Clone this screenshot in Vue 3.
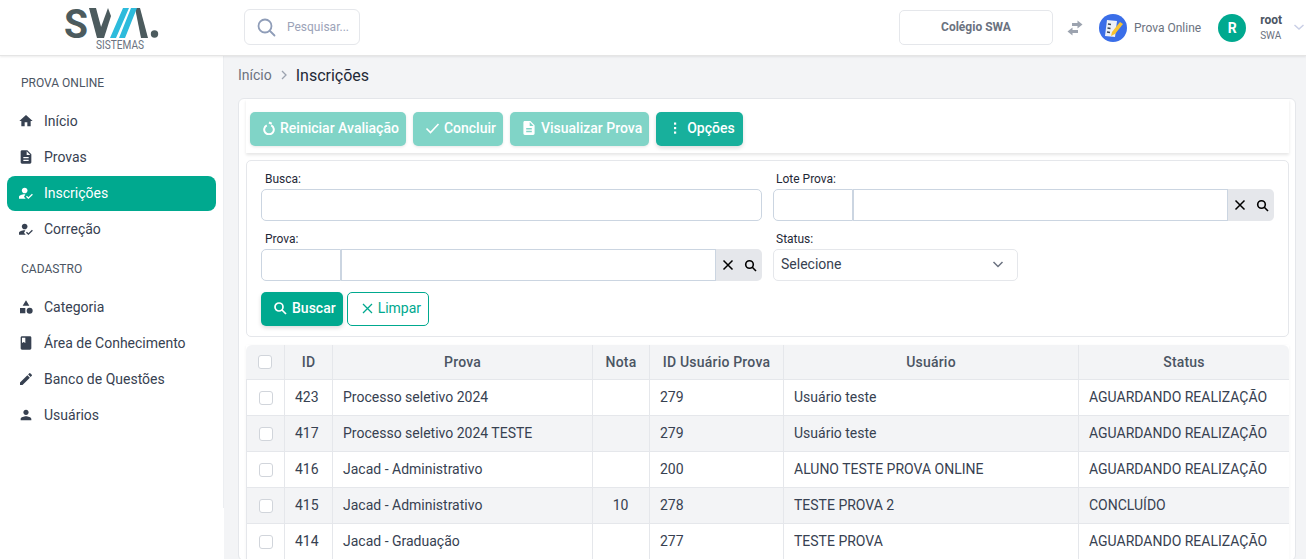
<script setup>
const menuA = [
  { label: 'Início', icon: 'home' },
  { label: 'Provas', icon: 'file' },
  { label: 'Inscrições', icon: 'usercheck', active: true },
  { label: 'Correção', icon: 'usercheck' }
]
const menuB = [
  { label: 'Categoria', icon: 'shapes' },
  { label: 'Área de Conhecimento', icon: 'book' },
  { label: 'Banco de Questões', icon: 'pencil' },
  { label: 'Usuários', icon: 'user' }
]
const rows = [
  { id: 423, prova: 'Processo seletivo 2024', nota: '', uid: 279, user: 'Usuário teste', status: 'AGUARDANDO REALIZAÇÃO' },
  { id: 417, prova: 'Processo seletivo 2024 TESTE', nota: '', uid: 279, user: 'Usuário teste', status: 'AGUARDANDO REALIZAÇÃO' },
  { id: 416, prova: 'Jacad - Administrativo', nota: '', uid: 200, user: 'ALUNO TESTE PROVA ONLINE', status: 'AGUARDANDO REALIZAÇÃO' },
  { id: 415, prova: 'Jacad - Administrativo', nota: '10', uid: 278, user: 'TESTE PROVA 2', status: 'CONCLUÍDO' },
  { id: 414, prova: 'Jacad - Graduação', nota: '', uid: 277, user: 'TESTE PROVA', status: 'AGUARDANDO REALIZAÇÃO' }
]
const icons = {
  home: 'M10 20v-6h4v6h5v-8h3L12 3 2 12h3v8z',
  file: 'M14 2H6c-1.1 0-2 .9-2 2v16c0 1.1.9 2 2 2h12c1.1 0 2-.9 2-2V8l-6-6zm2 16H8v-2h8v2zm0-4H8v-2h8v2zm-3-5V3.5L18.500 9H13z',
  usercheck: 'M10 12.500c2.400 0 4.300-1.900 4.300-4.300S12.400 4 10 4 5.700 5.800 5.700 8.200s1.900 4.300 4.300 4.300zm1 1.600C7 13.700 1.500 15.500 1.500 18v2.500h10L9 17.500l2-3.400zM15.600 21 12 17.500l1.400-1.400 2.200 2.100 5.300-5.100 1.400 1.400z',
  shapes: 'M12 2l5 8H7zM3 13.500h8v8H3zM17.500 13a4.500 4.500 0 1 1 0 9 4.500 4.500 0 0 1 0-9z',
  book: 'M18 2H6c-1.100 0-2 .9-2 2v16c0 1.100.9 2 2 2h12c1.100 0 2-.9 2-2V4c0-1.100-.9-2-2-2zM6 4h5v8l-2.500-1.500L6 12V4z',
  pencil: 'M3 17.250V21h3.750L17.810 9.940l-3.750-3.750L3 17.250zM20.710 7.040a1 1 0 0 0 0-1.410l-2.340-2.340a1 1 0 0 0-1.410 0l-1.830 1.830 3.750 3.750 1.830-1.830z',
  user: 'M12 12c2.210 0 4-1.790 4-4s-1.790-4-4-4-4 1.790-4 4 1.790 4 4 4zm0 2c-2.670 0-8 1.340-8 4v2h16v-2c0-2.660-5.330-4-8-4z'
}
</script>

<template>
  <div class="app">
    <header class="topbar">
      <div class="brand">
        <svg class="logo" width="96" height="52" viewBox="0 0 96 52" role="img" aria-label="SWA Sistemas">
          <text x="0" y="38" class="logo-s" textLength="24" lengthAdjust="spacingAndGlyphs">S</text>
          <path d="M25 8h7l8 30h-7z" fill="#4c5b5e" />
          <path d="M33 38h7l7-22-3-8z" fill="#4c5b5e" />
          <path d="M71 8h5l8 30h-7z" fill="#4c5b5e" />
          <path d="M46 38h6L65 8h-6zM55 38h6L73 8h-6z" fill="#2dbbdc" />
          <circle cx="90.500" cy="34" r="3.700" fill="#4c5b5e" />
          <text x="32" y="49" class="logo-sub" textLength="48" lengthAdjust="spacingAndGlyphs">SISTEMAS</text>
        </svg>
      </div>
      <div class="search">
        <svg width="20" height="20" viewBox="0 0 20 20" fill="none" stroke="#8f9db8" stroke-width="1.800">
          <circle cx="9" cy="9" r="6.500" /><path d="M14 14l4.500 4.500" stroke-linecap="round" />
        </svg>
        <span>Pesquisar...</span>
      </div>
      <div class="spacer"></div>
      <div class="school">Colégio SWA</div>
      <svg class="swap" width="18" height="18" viewBox="0 0 18 18" fill="#9ca3af">
        <path d="M11.500 1.500 16.500 5.500 11.500 9.500V7H6V4h5.500zM6.500 8.500V11H12v3H6.500v2.500L1.500 12.500z" />
      </svg>
      <div class="module">
        <svg width="28" height="28" viewBox="0 0 28 28">
          <circle cx="14" cy="14" r="14" fill="#3a6ee8" />
          <path d="M8 6l10 1-2 16-10-1z" fill="#edf1f7" />
          <path d="M9 10l3 .5M8.500 14l3 .5M8 18l3 .5" stroke="#3d4654" stroke-width="1.500" />
          <path d="M21 8l3 2-8 10-4 2 1-4z" fill="#f7c331" />
        </svg>
        <span>Prova Online</span>
      </div>
      <div class="avatar">R</div>
      <div class="who"><strong>root</strong><span>SWA</span></div>
      <svg class="caret" width="12" height="12" viewBox="0 0 12 12" fill="none" stroke="#c9cfe6" stroke-width="1.500"><path d="M1.500 4l4.500 4 4.500-4" /></svg>
    </header>

    <div class="body">
      <aside class="sidebar">
        <div class="section first">PROVA ONLINE</div>
        <a v-for="m in menuA" :key="m.label" class="item" :class="{ active: m.active }">
          <svg width="16" height="16" viewBox="0 0 24 24" fill="currentColor"><path :d="icons[m.icon]" /></svg>
          <span>{{ m.label }}</span>
        </a>
        <div class="section">CADASTRO</div>
        <a v-for="m in menuB" :key="m.label" class="item">
          <svg width="16" height="16" viewBox="0 0 24 24" fill="currentColor"><path :d="icons[m.icon]" /></svg>
          <span>{{ m.label }}</span>
        </a>
      </aside>

      <main class="main">
        <nav class="crumbs">
          <span class="c1">Início</span>
          <svg width="8" height="10" viewBox="0 0 8 10" fill="none" stroke="#9ca3af" stroke-width="1.300"><path d="M2 1l4 4-4 4" /></svg>
          <span class="c2">Inscrições</span>
        </nav>

        <section class="page">
          <div class="toolbar">
            <button class="btn solid dim">
              <svg width="14" height="14" viewBox="0 0 14 14" fill="none" stroke="#fff" stroke-width="2"><path d="M4.800 4.300a4.800 4.800 0 1 0 4.400 0" /><path d="M7 1.500h3" transform="rotate(25 7 1.500)" /></svg>
              Reiniciar Avaliação
            </button>
            <button class="btn solid dim">
              <svg width="15" height="14" viewBox="0 0 15 14" fill="none" stroke="#fff" stroke-width="1.600"><path d="M1.500 7.500l4 4 8-8.500" /></svg>
              Concluir
            </button>
            <button class="btn solid dim vis">
              <svg width="14" height="14" viewBox="4 2 16 20" fill="#fff"><path :d="icons.file" /></svg>
              Visualizar Prova
            </button>
            <button class="btn solid opts">
              <svg width="14" height="14" viewBox="0 0 14 14" fill="#fff"><rect x="6" y="1.500" width="2.200" height="2.200" /><rect x="6" y="6" width="2.200" height="2.200" /><rect x="6" y="10.500" width="2.200" height="2.200" /></svg>
              Opções
            </button>
          </div>

          <form class="filters" @submit.prevent>
            <div class="grid">
              <div class="field">
                <label>Busca:</label>
                <div class="input"></div>
              </div>
              <div class="field">
                <label>Lote Prova:</label>
                <div class="lookup">
                  <div class="lk-a"></div><div class="lk-b"></div>
                  <div class="lk-tools">
                    <svg width="12" height="12" viewBox="0 0 12 12" stroke="#000" stroke-width="1.500"><path d="M1.500 1.500l9 9M10.500 1.500l-9 9" /></svg>
                    <svg width="13" height="13" viewBox="0 0 13 13" fill="none" stroke="#000" stroke-width="1.600"><circle cx="5.500" cy="5.500" r="3.800" /><path d="M8.300 8.300l3.700 3.700" /></svg>
                  </div>
                </div>
              </div>
              <div class="field">
                <label>Prova:</label>
                <div class="lookup">
                  <div class="lk-a"></div><div class="lk-b"></div>
                  <div class="lk-tools">
                    <svg width="12" height="12" viewBox="0 0 12 12" stroke="#000" stroke-width="1.500"><path d="M1.500 1.500l9 9M10.500 1.500l-9 9" /></svg>
                    <svg width="13" height="13" viewBox="0 0 13 13" fill="none" stroke="#000" stroke-width="1.600"><circle cx="5.500" cy="5.500" r="3.800" /><path d="M8.300 8.300l3.700 3.700" /></svg>
                  </div>
                </div>
              </div>
              <div class="field">
                <label>Status:</label>
                <div class="select">
                  <span>Selecione</span>
                  <svg width="12" height="12" viewBox="0 0 12 12" fill="none" stroke="#6b7280" stroke-width="1.500"><path d="M1.500 4l4.500 4.500L10.500 4" /></svg>
                </div>
              </div>
            </div>
            <div class="actions">
              <button class="btn solid main-btn">
                <svg width="14" height="14" viewBox="0 0 14 14" fill="none" stroke="#fff" stroke-width="1.700"><circle cx="6" cy="6" r="4" /><path d="M9 9l4 4" /></svg>
                Buscar
              </button>
              <button class="btn outline">
                <svg width="13" height="13" viewBox="0 0 13 13" stroke="#00a98f" stroke-width="1.300"><path d="M2 2l9 9M11 2l-9 9" /></svg>
                Limpar
              </button>
            </div>
          </form>

          <table class="table">
            <colgroup>
              <col class="c-check" /><col class="c-id" /><col class="c-prova" /><col class="c-nota" />
              <col class="c-uid" /><col class="c-user" /><col />
            </colgroup>
            <thead>
              <tr>
                <th><i class="check"></i></th><th>ID</th><th>Prova</th><th>Nota</th><th>ID Usuário Prova</th><th>Usuário</th><th>Status</th>
              </tr>
            </thead>
            <tbody>
              <tr v-for="r in rows" :key="r.id">
                <td class="ctr chk"><i class="check"></i></td>
                <td class="ctr idc">{{ r.id }}</td>
                <td>{{ r.prova }}</td>
                <td class="ctr">{{ r.nota }}</td>
                <td>{{ r.uid }}</td>
                <td>{{ r.user }}</td>
                <td>{{ r.status }}</td>
              </tr>
            </tbody>
          </table>
        </section>
      </main>
    </div>
  </div>
</template>

<style>
html, body { margin: 0; height: 100%; overflow: hidden; }
</style>

<style scoped>
* { box-sizing: border-box; }
.app { height: 559px; overflow: hidden; display: flex; flex-direction: column; font-family: Roboto, "Liberation Sans", sans-serif; color: #374151; background: #f3f4f6; }

.topbar { height: 56px; flex: none; display: flex; align-items: center; background: #fff; border-bottom: 1px solid #e5e5e5; box-shadow: 0 1px 2px rgba(0,0,0,.08); position: relative; z-index: 2; }
.brand { width: 244px; flex: none; padding-left: 64px; height: 55px; }
.logo { display: block; overflow: visible; }
.logo-s { font-family: Roboto, sans-serif; font-weight: 700; font-size: 41px; fill: #4c5b5e; }
.logo-sub { font-family: Roboto, sans-serif; font-size: 12px; fill: #6b7280; }
.search { width: 116px; height: 36px; border: 1px solid #e5e7eb; border-radius: 6px; display: flex; align-items: center; gap: 11px; padding-left: 11px; font-size: 12px; color: #9ca3b8; margin-top: -1px; }
.spacer { flex: 1; }
.school { width: 154px; height: 35px; border: 1px solid #e5e7eb; border-radius: 5px; display: flex; align-items: center; justify-content: center; font-size: 12px; font-weight: 700; color: #6b7280; margin-top: -1px; }
.swap { margin-left: 13px; }
.module { display: flex; align-items: center; gap: 7px; margin-left: 15px; font-size: 12px; color: #6b7280; }
.avatar { width: 28px; height: 28px; margin-left: 17px; border-radius: 50%; background: #00a98f; color: #fff; font-size: 14px; font-weight: 700; display: flex; align-items: center; justify-content: center; }
.who { margin-left: 14px; display: flex; flex-direction: column; font-size: 12px; line-height: 15px; }
.who strong { color: #4b5563; }
.who span { font-size: 10px; color: #6b7280; }
.caret { margin: -2px 1px 0 11px; }

.body { flex: 1; min-height: 0; display: flex; }
.sidebar { width: 224px; flex: none; background: #fff; padding: 0 8px 0 7px; position: relative; }
.sidebar::after { content: ""; position: absolute; top: 0; right: 0; width: 1px; height: 452px; background: #eceef1; }
.section { font-size: 12px; line-height: 14px; color: #4b5563; padding-left: 14px; margin: 15px 0 14px; }
.section.first { margin-top: 20px; }
.item { display: flex; align-items: center; gap: 10px; height: 35px; margin-top: 1px; padding: 0 0 2px 11px; border-radius: 8px; font-size: 14px; color: #374151; }
.item.active { background: #00a98f; color: #fff; }

.main { flex: 1; min-width: 0; padding: 0 10px 0 14px; }
.crumbs { height: 42px; display: flex; align-items: center; gap: 8px; padding-bottom: 4px; }
.c1 { font-size: 14px; color: #6b7280; }
.c2 { font-size: 16px; color: #1f2937; }

.page { background: #fff; border: 1px solid #e5e7eb; border-radius: 6px; padding: 0 6px 0 7px; }
.toolbar { height: 54px; display: flex; gap: 7px; align-items: flex-start; padding: 13px 4px 0; box-shadow: 0 2px 3px rgba(0,0,0,.1); }
.btn { font: 500 14px Roboto, sans-serif; height: 34px; border-radius: 5px; display: inline-flex; align-items: center; gap: 4px; padding: 0 7px 2px 12px; white-space: nowrap; }
.solid { background: #00a98f; color: #fff; border: 0; box-shadow: 0 2px 4px rgba(0,0,0,.14); }
.dim { background: #80d4c7; box-shadow: 0 1px 3px rgba(0,0,0,.1); }
.vis { gap: 5px; padding-right: 7px; }
.opts { background: #18b09c; padding: 0 8px 2px 12px; gap: 5px; }
.outline { background: #fff; color: #00a98f; border: 1px solid #00a98f; font-weight: 400; padding: 0 7px 2px 13px; }

.filters { margin-top: 7px; border: 1px solid #e5e7eb; border-radius: 5px; height: 177px; padding: 11px 14px 0; }
.grid { display: grid; grid-template-columns: 501px 501px; column-gap: 11px; row-gap: 11px; }
.field label { display: block; font-size: 12px; line-height: 14px; color: #1f2937; padding-left: 4px; margin-bottom: 3px; }
.field:nth-child(even) label { padding-left: 3px; }
.input, .lookup, .select { height: 32px; }
.input { border: 1px solid #cbd5e1; border-radius: 5px; }
.lookup { display: flex; }
.lk-a { width: 80px; border: 1px solid #cbd5e1; border-radius: 5px 0 0 5px; }
.lk-b { flex: 1; border: 1px solid #cbd5e1; }
.lk-tools { width: 46px; background: #e5e7eb; border-radius: 0 5px 5px 0; display: flex; align-items: center; justify-content: space-between; padding: 0 5px 0 6px; }
.select { width: 245px; border: 1px solid #e5e7eb; border-radius: 5px; display: flex; align-items: center; justify-content: space-between; padding: 0 13px 2px 7px; font-size: 14px; color: #374151; }
.actions { display: flex; gap: 4px; margin-top: 11px; }
.main-btn { padding: 0 7px 2px 12px; gap: 5px; }

.table { width: 1043px; margin-top: 8px; border-collapse: separate; border-spacing: 0; table-layout: fixed; font-size: 14px; color: #374151; box-shadow: 0 1px 3px rgba(0,0,0,.05); }
.c-check { width: 39px; }
.c-id { width: 48px; }
.c-prova { width: 260px; }
.c-nota { width: 57px; }
.c-uid { width: 134px; }
.c-user { width: 295px; }
.table th { height: 35px; background: #f3f4f6; font-size: 14px; font-weight: 500; letter-spacing: .2px; color: #4b5563; border-bottom: 1px solid #e5e7eb; border-right: 1px solid #e5e7eb; }
.table th:first-child { border-top-left-radius: 6px; }
.table th:last-child { border-top-right-radius: 6px; border-right: 0; }
.table td { height: 36px; padding: 0 11px 2px 10px; border-bottom: 1px solid #e5e7eb; border-right: 1px solid #e5e7eb; white-space: nowrap; overflow: hidden; }
.table td:first-child { border-left: 1px solid #e5e7eb; }
.table td:last-child { border-right: 0; }
.table tbody tr:nth-child(even) td { background: #f3f4f6; }
.ctr { text-align: center; }
.table td.chk { padding: 0; }
.table td.idc { padding-right: 14px; }
.check { display: block; width: 14px; height: 14px; margin: auto; background: #fff; border: 1px solid #d1d5db; border-radius: 3px; }
</style>
